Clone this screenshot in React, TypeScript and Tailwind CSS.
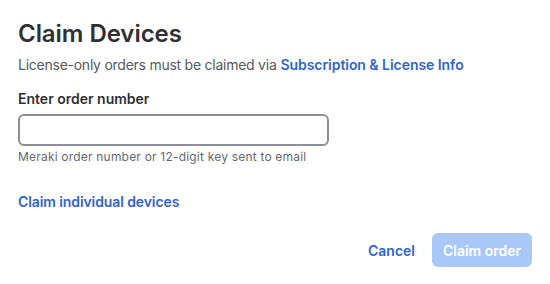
import React from "react";

export default function App() {
  return (
    <div
      className="w-[550px] h-[284px] bg-white relative"
      style={{ fontFamily: "Inter, 'Noto Sans', sans-serif" }}
    >
      <div className="pt-[19px] px-[18px]">
        <h1 className="text-[24px] leading-[30px] font-semibold text-[#2e3035] tracking-[-0.05px]">
          Claim Devices
        </h1>
        <p className="mt-[6px] text-[14px] leading-[20px] text-[#55585e]">
          <span className="tracking-[-0.25px]">License-only orders must be claimed via</span>{" "}
          <span className="font-semibold text-[#2f66c8] tracking-[-0.05px]">Subscription &amp; License Info</span>
        </p>
        <div className="mt-[14px] text-[14px] leading-[20px] font-semibold text-[#2e3035]">
          Enter order number
        </div>
        <div className="mt-[5px] w-[311px] h-[32px] border-2 border-[#8c8f95] rounded-[6px]" />
        <div className="mt-[3px] text-[12px] leading-[16px] text-[#66696f] tracking-[0.2px]">
          Meraki order number or 12-digit key sent to email
        </div>
        <div className="mt-[27px] text-[14px] leading-[20px] font-semibold text-[#2f66c8] tracking-[-0.1px]">
          Claim individual devices
        </div>
        <div className="mt-[21px] flex justify-end items-center gap-[17px]">
          <span className="text-[14px] font-semibold text-[#2f66c8]">Cancel</span>
          <div className="w-[100px] h-[34px] rounded-[6px] bg-[#a9c8f8] flex items-center justify-center text-[14px] font-semibold text-white">
            Claim order
          </div>
        </div>
      </div>
    </div>
  );
}
